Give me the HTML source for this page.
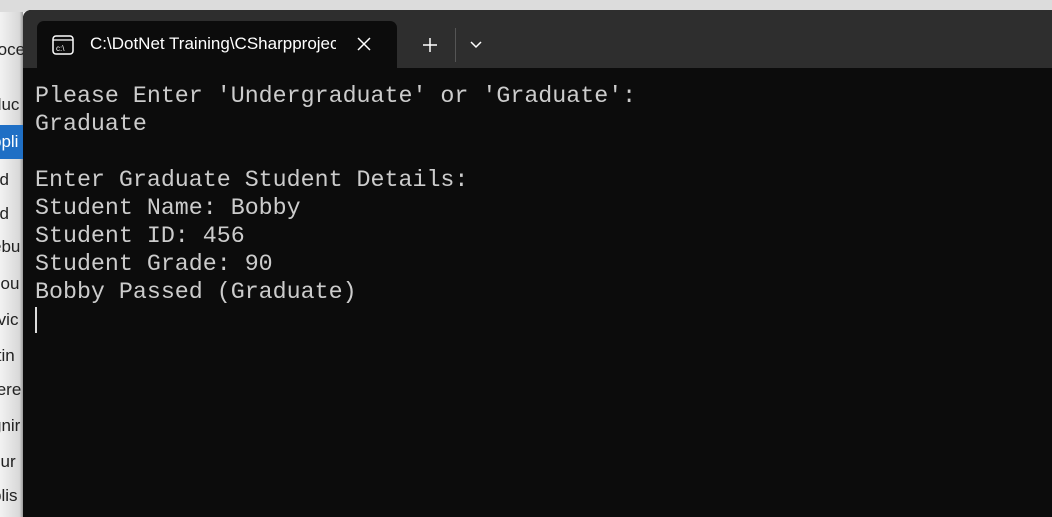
<!DOCTYPE html>
<html><head><style>
body{margin:0;width:1052px;height:517px;overflow:hidden;background:#f0f0f0;position:relative;font-family:"Liberation Sans",sans-serif}
.top{position:absolute;left:0;top:0;width:1052px;height:12px;background:#dcdcdc}
.side{position:absolute;left:0;top:12px;width:23px;height:505px;background:linear-gradient(90deg,#f2f2f2,#d8d8d8 85%,#9a9a9a);overflow:hidden}
.side div{position:absolute;left:-8px;font-size:17px;color:#222;white-space:nowrap}
.win{position:absolute;left:23px;top:10px;width:1029px;height:507px;background:#0c0c0c;border-top-left-radius:8px;overflow:hidden}
.bar{position:absolute;left:0;top:0;width:100%;height:58px;background:#2e2e2e}
.tab{position:absolute;left:14px;top:11px;width:360px;height:47px;background:#0c0c0c;border-radius:7px 7px 0 0}
.title{position:absolute;left:67px;top:24px;color:#fff;font-size:17px;white-space:nowrap;width:246px;overflow:hidden}
.term{position:absolute;left:12px;top:72px;color:#cccccc;font-family:"Liberation Mono",monospace;font-size:23.3px;line-height:28px;white-space:pre}
</style></head><body>
<div class="top"></div>
<div class="side">
<div style="top:28px">roce</div>
<div style="top:83px">duc</div>
<div style="top:113px;background:#1f6fc5;color:#fff;width:40px;height:34px;line-height:34px;top:113px">ppli</div>
<div style="top:158px">ild</div>
<div style="top:192px">ild</div>
<div style="top:225px">ebu</div>
<div style="top:262px">sou</div>
<div style="top:298px">rvic</div>
<div style="top:334px">ttin</div>
<div style="top:368px">fere</div>
<div style="top:404px">gnir</div>
<div style="top:440px">cur</div>
<div style="top:474px">blis</div>
</div>
<div class="win">
<div class="bar"></div>
<div class="tab"></div>
<svg style="position:absolute;left:29px;top:25px" width="22" height="20" viewBox="0 0 22 20"><rect x="1" y="1" width="20" height="18" rx="3" fill="none" stroke="#fff" stroke-width="1.5"/><line x1="1" y1="5" x2="21" y2="5" stroke="#fff" stroke-width="1.3"/><text x="4" y="16" font-size="8" fill="#fff" font-family="Liberation Sans">c:\</text></svg>
<div class="title">C:\DotNet Training\CSharpproject</div>
<svg style="position:absolute;left:334px;top:27px" width="14" height="14"><path d="M1 1L13 13M13 1L1 13" stroke="#fff" stroke-width="1.5"/></svg>
<svg style="position:absolute;left:399px;top:27px" width="16" height="16"><path d="M8 1V15M1 8H15" stroke="#fff" stroke-width="1.5"/></svg>
<div style="position:absolute;left:432px;top:18px;width:1px;height:34px;background:#555"></div>
<svg style="position:absolute;left:446px;top:30px" width="14" height="10"><path d="M2 2L7 7L12 2" stroke="#fff" stroke-width="1.5" fill="none"/></svg>
<div class="term">Please Enter 'Undergraduate' or 'Graduate':
Graduate

Enter Graduate Student Details:
Student Name: Bobby
Student ID: 456
Student Grade: 90
Bobby Passed (Graduate)</div>
<div style="position:absolute;left:12px;top:297px;width:2px;height:26px;background:#ddd"></div>
</div>
</body></html>
